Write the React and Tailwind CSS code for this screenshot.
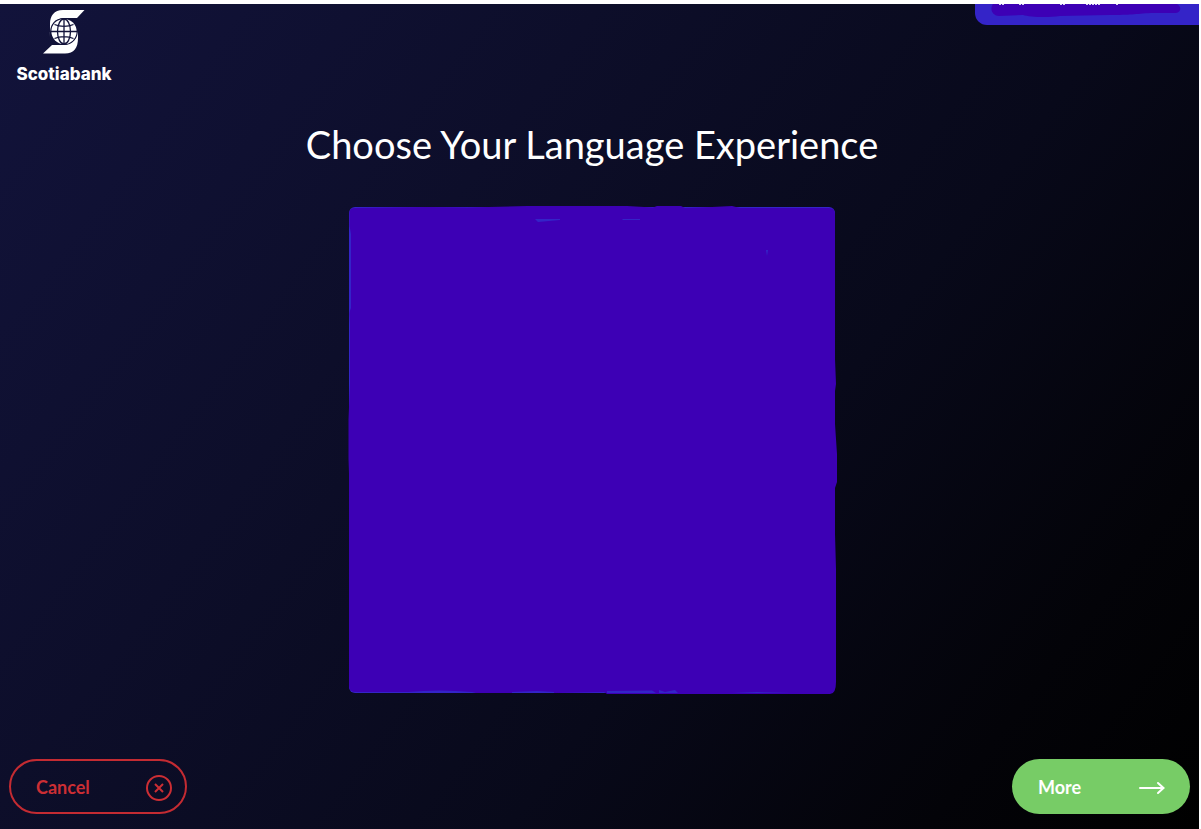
import React from "react";

function ScotiabankLogo() {
  return (
    <a href="#home" aria-label="Scotiabank" className="flex w-32 flex-col items-center pt-1.5">
      <svg width="42" height="44" viewBox="0 0 42 44" fill="none" aria-hidden="true">
        <path d="M41.500 0H20C11 0 7 6 7 14V27C6 14 12 8 21 8H34Z" fill="#fff" />
        <path d="M0 43.500L9 35H21C29 35 36 29 35 17V28C35 38 31 43.500 22 43.500Z" fill="#fff" />
        <circle cx="21" cy="21.500" r="13.200" fill="#12133a" />
        <circle cx="21" cy="21.500" r="12.600" fill="#fff" />
        <g stroke="#12133a" strokeWidth="1.3">
          <path d="M21 9V34M8 21.500H34M11.500 14.500C17 17 25 17 30.500 14.500M11.500 28.500C17 26 25 26 30.500 28.500" />
          <ellipse cx="21" cy="21.500" rx="6.500" ry="12.500" />
        </g>
      </svg>
      <span className="mt-2 font-['Inter',sans-serif] text-[17px] font-extrabold leading-6 text-white">Scotiabank</span>
    </a>
  );
}

function CornerTab() {
  return (
    <div className="h-[21px] w-[224px] overflow-hidden rounded-bl-xl bg-[#3424c8]">
      <svg width="224" height="21" viewBox="0 0 224 21" aria-hidden="true">
        <path d="M18 0H202C207 3 206 8 201 9L176 9C160 10 155 11 135 11L85 12C72 14 54 13 48 11L24 12C16 11 15 4 18 0Z" fill="#3d00b5" />
        <path d="M24 .5H29M44 .5H50M85 .5H90M111 .5H125M141 .5H144" stroke="#d8d4f4" strokeDasharray="2 1" />
      </svg>
    </div>
  );
}

function LanguagePanel() {
  return (
    <svg className="w-[490px] max-w-full" viewBox="0 0 490 492" role="img" aria-label="Language selection">
      <rect x="2" y="3" width="486" height="486" rx="6" fill="#3424c8" />
      <path d="M8 4L80 3L120 3.500L180 2L280 2L306 3.500L310 2H334L338 4L365 3L385 2L393 4H482Q488 4 488 10V155L489 180L488 187V220L490 250V278L488 284L488 330L489 365V470L489 478Q489 490 483 490H260L257 488L210 489L129 489L125 488Q92 485 61 488H9Q2 488 2 482V270L1.500 255V215L3 180V120L2.500 110L4 95V30L2.500 22V10Q2 4 8 4Z" fill="#3d00b5" />
      <path d="M188 15H213V16L191 18ZM276 15H293V16H275ZM419 46H421L420 52ZM260 487L305 486.500L309 489H260ZM312 489V486L318 488L328 486L331 489ZM2 86L4 89V104L2.500 108ZM165 488L190 487L207 488V489H165ZM385 489L410 488L445 489Z" fill="#3424c8" />
    </svg>
  );
}

export default function App() {
  return (
    <div className="flex min-h-screen flex-col bg-white pt-1 pr-0.5 font-['Lato',sans-serif]">
      <div className="flex flex-1 flex-col bg-[linear-gradient(127deg,#12133b_0%,#0d0e2a_33%,#08091a_62%,#030308_85%,#000_100%)]">
        <header className="flex h-24 items-start justify-between">
          <ScotiabankLogo />
          <CornerTab />
        </header>
        <main className="flex flex-1 flex-col items-center pr-[15px] pt-5">
          <h1 className="mb-9 text-center text-[38px] leading-[48px] text-white">Choose Your Language Experience</h1>
          <LanguagePanel />
        </main>
        <footer className="flex items-center justify-between px-[9px] pb-[15px]">
          <button type="button" className="flex h-[55px] w-[178px] items-center justify-between rounded-full border-2 border-[#c42b32] pl-[25px] pr-3 text-lg font-bold text-[#cc2e34]">
            Cancel
            <svg width="28" height="28" viewBox="0 0 28 28" fill="none" stroke="currentColor" strokeWidth="2" aria-hidden="true">
              <circle cx="14" cy="15" r="12" />
              <path d="M10 11L18 19M18 11L10 19" />
            </svg>
          </button>
          <button type="button" className="flex h-[55px] w-[178px] items-center justify-between rounded-full bg-[#77cc66] pl-[26px] pr-[25px] text-lg font-bold text-white">
            More
            <svg width="26" height="16" viewBox="0 0 26 16" fill="none" stroke="currentColor" strokeWidth="2" strokeLinecap="round" aria-hidden="true">
              <path d="M1 9H24M19 4L24.500 9L19 14" />
            </svg>
          </button>
        </footer>
      </div>
    </div>
  );
}
